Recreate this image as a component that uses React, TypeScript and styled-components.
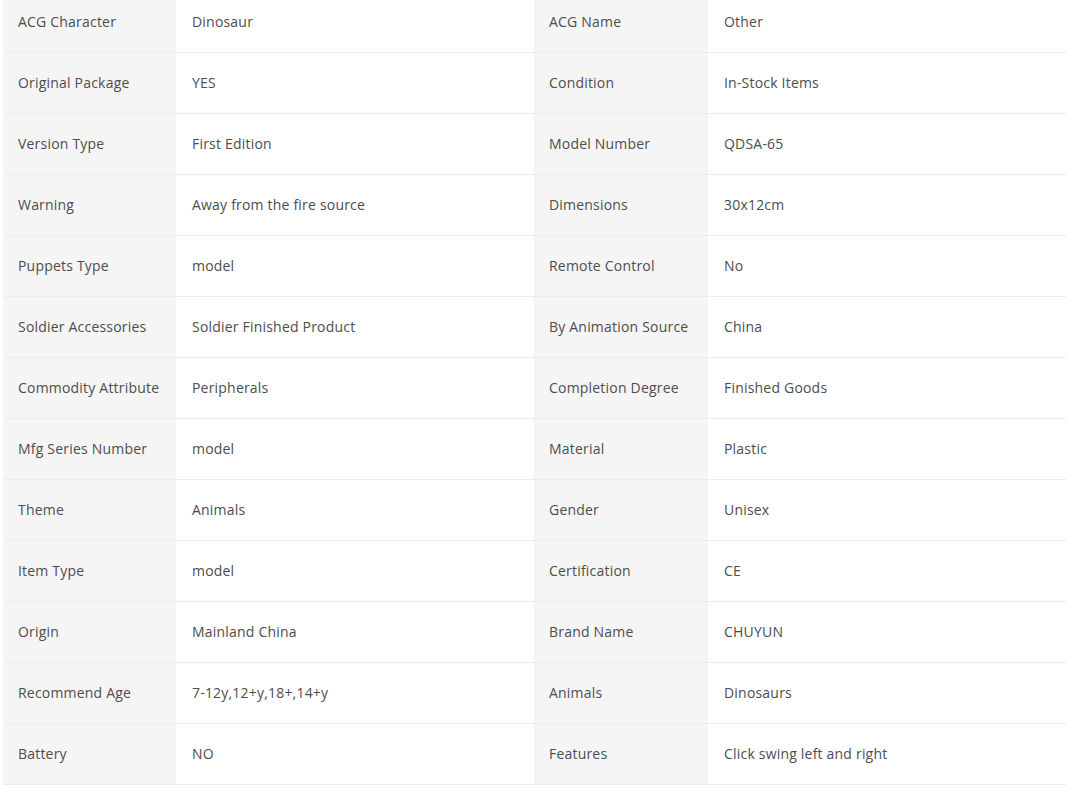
import * as React from 'react';
import styled, { createGlobalStyle } from 'styled-components';

const GlobalStyle = createGlobalStyle`
  body {
    margin: 0;
    background: #fff;
    font-family: "Open Sans", "Liberation Sans", sans-serif;
  }
`;

const Page = styled.div`
  padding-left: 3px;
  margin-top: -8px;
  width: 1063px;
`;

const Specs = styled.div`
  display: grid;
  grid-template-columns: 173px 358px 174px 358px;
`;

const Cell = styled.div<{ $label?: boolean }>`
  box-sizing: border-box;
  height: 61px;
  display: flex;
  align-items: center;
  padding: 0 0 2px ${(p) => (p.$label ? '15px' : '16px')};
  border-bottom: 1px solid #ebebeb;
  background: ${(p) => (p.$label ? '#f5f5f5' : '#fff')};
  font-size: 14px;
  letter-spacing: 0.2px;
  color: #4d4d4d;
  white-space: nowrap;
`;

const specs: [string, string, string, string][] = [
  ['ACG Character', 'Dinosaur', 'ACG Name', 'Other'],
  ['Original Package', 'YES', 'Condition', 'In-Stock Items'],
  ['Version Type', 'First Edition', 'Model Number', 'QDSA-65'],
  ['Warning', 'Away from the fire source', 'Dimensions', '30x12cm'],
  ['Puppets Type', 'model', 'Remote Control', 'No'],
  ['Soldier Accessories', 'Soldier Finished Product', 'By Animation Source', 'China'],
  ['Commodity Attribute', 'Peripherals', 'Completion Degree', 'Finished Goods'],
  ['Mfg Series Number', 'model', 'Material', 'Plastic'],
  ['Theme', 'Animals', 'Gender', 'Unisex'],
  ['Item Type', 'model', 'Certification', 'CE'],
  ['Origin', 'Mainland China', 'Brand Name', 'CHUYUN'],
  ['Recommend Age', '7-12y,12+y,18+,14+y', 'Animals', 'Dinosaurs'],
  ['Battery', 'NO', 'Features', 'Click swing left and right'],
];

export default function App() {
  return (
    <>
      <GlobalStyle />
      <Page>
        <Specs>
          {specs.map(([l1, v1, l2, v2]) => (
            <React.Fragment key={l1}>
              <Cell $label>{l1}</Cell>
              <Cell>{v1}</Cell>
              <Cell $label>{l2}</Cell>
              <Cell>{v2}</Cell>
            </React.Fragment>
          ))}
        </Specs>
      </Page>
    </>
  );
}
